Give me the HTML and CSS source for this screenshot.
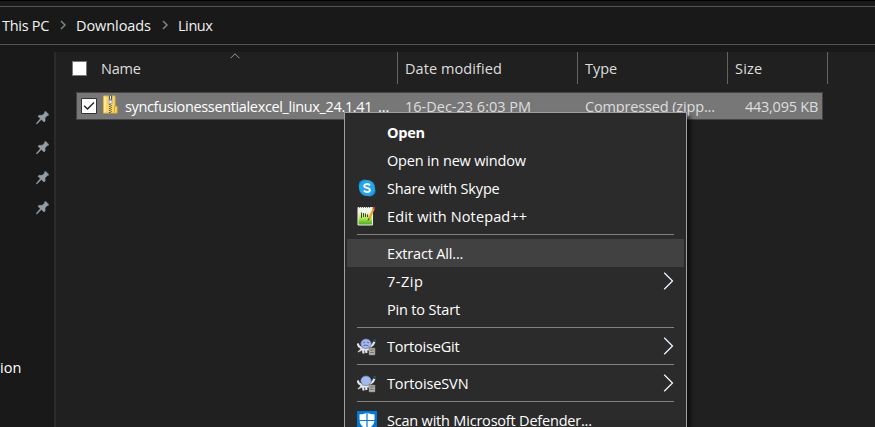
FILE: index.html
```html
<!DOCTYPE html>
<html lang="en">
<head>
<meta charset="utf-8">
<title>Linux</title>
<link rel="stylesheet" href="styles.css">
</head>
<body>
<svg class="defs" width="0" height="0" aria-hidden="true">
  <symbol id="pin" viewBox="0 0 13 14"><path d="M8.6 .8 9.8.4 12.7 3.4 12.2 4.6 11.3 4.5 9 6.900 9.200 9.900 8 11 5.300 8.500 1.500 12.500.4 13 .4 12.200 4.300 7.700 2 5.300 3.100 4.300 6.200 4.300 8.700 2Z" fill="#929da5" stroke="#929da5" stroke-width=".5"/></symbol>
  <symbol id="sep" viewBox="0 0 6 10"><path d="M1 1 5 5 1 9" fill="none" stroke="#858585" stroke-width="1.500"/></symbol>
  <symbol id="more" viewBox="0 0 11 18"><path d="M1.200 .8 9.500 9 1.200 17.200" fill="none" stroke="#eef6ff" stroke-width="1.250"/></symbol>
  <symbol id="turtle" viewBox="0 0 20 18">
    <path d="M.5 5.500 2 8.500 5 10M5 10 3 13M6 11 6.500 15.500M9 12 9.500 15M13 9 16 6.500 17.500 3.500" fill="none" stroke="#e6e7e9" stroke-width="2.200"/>
    <path d="M1 14 4 12" stroke="#cfd3dc" stroke-width="1.500"/>
    <path d="M4.500 9.500h9l-1 3h-6z" fill="#e6e7e9"/>
    <ellipse cx="9" cy="5.800" rx="5.200" ry="4.800" fill="#a5b9ef" stroke="#667cae" stroke-width=".7"/>
    <path d="M16.500 1h2.500v3h-2.500z" fill="#15516b"/>
    <path d="M12 10h6v7h-6z" fill="#b9b5af" stroke="#77736d" stroke-width=".6"/>
    <path d="M13.300 12h3.400m-3.400 2.400h3.400" stroke="#66625d"/>
  </symbol>
</svg>
<div class="window">
  <nav class="address">
    <span class="t-pc">This PC</span><svg><use href="#sep"/></svg>
    <span class="t-dl">Downloads</span><svg><use href="#sep"/></svg>
    <span class="t-linux">Linux</span>
  </nav>
  <div class="body">
    <aside class="sidebar">
      <svg><use href="#pin"/></svg><svg><use href="#pin"/></svg><svg><use href="#pin"/></svg><svg><use href="#pin"/></svg>
      <span class="side-label">ion</span>
    </aside>
    <main class="files">
      <div class="head">
        <div class="c-name"><i class="box"></i><span class="t-name">Name</span>
          <svg class="sort" viewBox="0 0 10 6"><path d="M.5 5.300 5 .8 9.500 5.300" fill="none" stroke="#989898"/></svg></div>
        <div class="c-date"><span class="t-date">Date modified</span></div>
        <div class="c-type"><span class="t-type">Type</span></div>
        <div class="c-size"><span class="t-size">Size</span></div>
      </div>
      <div class="row">
        <div class="r-name">
          <svg class="check" viewBox="0 0 16 16"><path d="M.5.5h15v15H.5z" fill="#fff" stroke="#333"/><path d="m3.200 7.800 3.300 3.300 6.500-6.500" fill="none" stroke="#222" stroke-width="1.400"/></svg>
          <svg class="zip" viewBox="0 0 15 19"><path d="M.5 1h11.500v10.500h2V18H.5z" fill="#f8d566" stroke="#e3b63d"/><path d="M1 1.500h2V17.500H1z" fill="#ffe79a"/><path d="M11.500 11v6.500" stroke="#dba927"/><path d="M5.500 1h4v8h-4z" fill="#a9a9a9"/><path d="M6 .5h3v4H6z" fill="#555"/><path d="M7 1h1v3H7zM6.500 6h2v2h-2z" fill="#eee"/><path d="M6.800 9v9.500" stroke="#555" stroke-width="1.500" stroke-dasharray="1 1"/><path d="M8.300 10v8.500" stroke="#777" stroke-width="1.500" stroke-dasharray="1 1"/></svg>
          <span class="t-file">syncfusionessentialexcel_linux_24.1.41</span><span class="dots">...</span>
        </div>
        <div class="r-date"><span class="t-when">16-Dec-23 6:03 PM</span></div>
        <div class="r-type"><span class="t-comp">Compressed (zipp...</span></div>
        <div class="r-size"><span class="t-kb">443,095 KB</span></div>
      </div>
    </main>
  </div>
</div>
<div class="menu">
  <div class="item"><i></i><b class="m-open">Open</b></div>
  <div class="item"><i></i><span class="m-new">Open in new window</span></div>
  <div class="item"><i><svg class="skype" width="18" height="18" viewBox="0 0 18 18"><circle cx="6.500" cy="6.500" r="5.900" fill="#1686d0"/><circle cx="11.700" cy="11.700" r="5.900" fill="#1686d0"/><circle cx="9" cy="9" r="8" fill="#27a5ea"/><path d="M12 6.300C10.500 4.400 6.200 4.800 6.200 7 6.200 9.500 11.900 8.300 11.900 11 11.900 13.500 7.500 13.700 5.900 11.500" fill="none" stroke="#fff" stroke-width="1.900"/></svg></i><span class="m-skype">Share with Skype</span></div>
  <div class="item"><i><svg class="npp" width="19" height="20" viewBox="0 0 19 20"><defs><linearGradient id="g" x2="0" y2="1"><stop offset=".25" stop-color="#f2f5e9"/><stop offset=".6" stop-color="#b9e85a"/><stop offset="1" stop-color="#3da818"/></linearGradient></defs><path d="M1 1.500h14.500V19H1z" fill="url(#g)" stroke="#eee"/><path d="M2 1.500h12" stroke="#777" stroke-dasharray="1 1"/><path d="M4.500 6.500v5.500m2-5v4m2-3.500v3.500m2-2.500v2.500" stroke="#35501e"/><path d="m17 2-5 11" stroke="#e7a02b" stroke-width="2"/><path d="m17.500 1-.8 2" stroke="#b33c30" stroke-width="2.200"/><path d="m12 12.500-1 2" stroke="#333"/></svg></i><span class="m-npp">Edit with Notepad++</span></div>
  <hr>
  <div class="item active"><i></i><span class="m-extract">Extract All...</span></div>
  <div class="item"><i></i><span class="m-zip">7-Zip</span><svg class="more"><use href="#more"/></svg></div>
  <div class="item"><i></i><span class="m-pin">Pin to Start</span></div>
  <hr>
  <div class="item"><i><svg class="turtle"><use href="#turtle"/><path d="m6 5 2-1m2 0 2 1M6.500 7.500 9 7l2.500 1" fill="none" stroke="#536da6"/></svg></i><span class="m-git">TortoiseGit</span><svg class="more"><use href="#more"/></svg></div>
  <hr>
  <div class="item"><i><svg class="turtle"><use href="#turtle"/></svg></i><span class="m-svn">TortoiseSVN</span><svg class="more"><use href="#more"/></svg></div>
  <hr>
  <div class="item last"><i><svg class="shield" width="20" height="20" viewBox="0 0 20 20"><path d="M0 0h20v20H0z" fill="#0078d7"/><path d="M10 1.500C7.500 3 5 3.300 2.500 3.300V9c0 4.500 3.500 7.500 7.500 9.500 4-2 7.500-5 7.500-9.500V3.300C15 3.300 12.500 3 10 1.500Z" fill="#fff"/><path d="M10 1v18M2 9.500h16" stroke="#0078d7" stroke-width="1.200"/></svg></i><span class="m-scan">Scan with Microsoft Defender...</span></div>
</div>
</body>
</html>
```
FILE: styles.css
```css
* { box-sizing: border-box; }
html, body { margin: 0; width: 875px; height: 427px; overflow: hidden; }
body { position: relative; background: #191919; color: #fff; font: 14.500px/20px "Open Sans", "Noto Sans", sans-serif; }
svg { display: block; flex: none; }
.defs { position: absolute; }
span, b { white-space: pre; flex: none; }
.window { height: 427px; border-top: 1px solid #000; padding-top: 5px; }
.address { height: 39px; border: solid #535353; border-width: 1px 0; display: flex; align-items: center; padding-left: 2px; }
.address svg { width: 6px; height: 10px; margin: -2px 10px 0 11px; }
.address span { color: #f2f2f2; }
.body { display: flex; height: 382px; }
.sidebar { width: 54px; display: flex; flex-direction: column; padding-top: 66px; }
.sidebar svg { width: 13px; height: 14px; margin: 0 0 16px 36px; }
.side-label { margin-top: 127px; }
.files { flex: 1; margin-top: 7px; background: #202020; border-left: 2px solid #2b2b2b; }
.head { display: flex; height: 32px; color: #dedede; }
.head > div { border-right: 1px solid #636363; display: flex; align-items: center; padding: 2px 0 0 7px; position: relative; }
.head .c-name { width: 342px; padding-left: 16px; }
.c-date { width: 180px; }
.c-type { width: 150px; }
.c-size { width: 100px; }
.box { width: 15px; height: 15px; margin: -2px 14px 0 0; background: #fff; border: 1px solid #777; }
.sort { position: absolute; width: 10px; height: 6px; left: 174px; top: 1px; }
.row { display: flex; width: 747px; height: 28px; margin: 8px 0 0 20px; background: #777; border: 1px solid #444; color: #dedede; }
.row > div { display: flex; align-items: center; padding-top: 1px; }
.row .r-name { width: 328px; padding: 0 0 0 4px; color: #fff; }
.r-date { width: 180px; }
.r-type { width: 150px; }
.row .r-size { flex: 1; justify-content: flex-end; padding-right: 4px; }
.t-file, .dots { margin-top: 1px; }
.check { width: 16px; height: 16px; margin-right: 6px; }
.zip { width: 15px; height: 19px; margin-right: 7px; position: relative; top: -2px; }
.t-file { width: 253px; letter-spacing: -.35px; }
.t-pc { letter-spacing: -.3px; }
.t-dl { letter-spacing: -.07px; }
.t-linux { letter-spacing: -.4px; }
.t-name { letter-spacing: -.2px; }
.t-date { letter-spacing: .08px; }
.t-size { letter-spacing: .2px; }
.t-comp { letter-spacing: -.15px; }
.t-kb { letter-spacing: -.25px; }
.m-open { letter-spacing: -.25px; }
.m-new, .m-skype, .m-extract, .m-pin { letter-spacing: -.17px; }
.m-npp { letter-spacing: .14px; }
.m-zip { letter-spacing: .5px; }
.m-git, .m-scan { letter-spacing: -.2px; }
.m-svn { letter-spacing: -.12px; }
.menu { position: absolute; left: 344px; top: 112px; width: 343px; height: 315px; padding: 5px 2px 0; overflow: hidden; background: #2b2b2b; border: 1px solid #a0a0a0; border-bottom: 0; box-shadow: 4px 4px 4px #0008; }
.item { height: 28px; display: flex; align-items: center; padding: 1px 10px 0; }
.item.last { height: 21px; align-items: flex-start; padding-top: 5px; }
.item i { width: 30px; display: flex; align-items: center; flex: none; }
.item.active { background: #414141; }
.menu hr { height: 1px; margin: 4px 10px; border: 0; background: #808080; }
.more { width: 11px; height: 18px; margin: -1px 0 0 auto; }
.skype { margin: -2px 0 0 1px; }
.npp { margin-top: -1px; }
.turtle { width: 20px; height: 18px; }
```
